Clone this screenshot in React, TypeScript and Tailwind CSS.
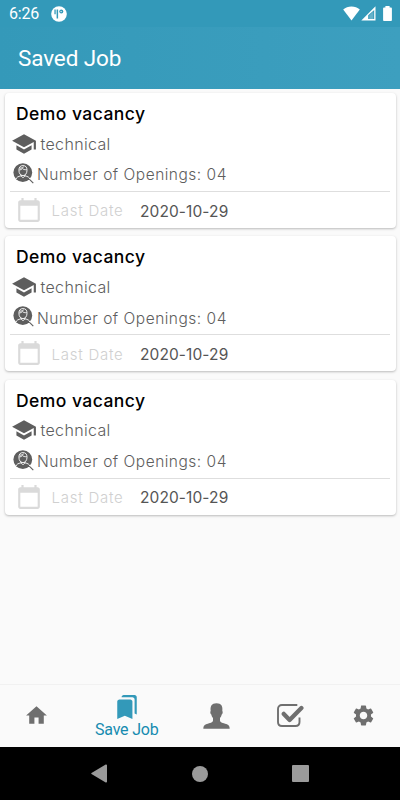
import { MdBookmarks, MdHome, MdSchool, MdSettings } from 'react-icons/md'

const jobs = [
  { id: 1, title: 'Demo vacancy', category: 'technical', openings: '04', lastDate: '2020-10-29' },
  { id: 2, title: 'Demo vacancy', category: 'technical', openings: '04', lastDate: '2020-10-29' },
  { id: 3, title: 'Demo vacancy', category: 'technical', openings: '04', lastDate: '2020-10-29' },
]

type Job = (typeof jobs)[number]

function StatusBar() {
  return (
    <div className="h-[27px] bg-[#3399b9] flex items-center justify-between pl-[9px] pr-2 text-white">
      <div className="flex items-center gap-[12px] pt-px">
        <span className="text-[16px] leading-none w-[30px] whitespace-nowrap tracking-[-0.2px]">6:26</span>
        <svg className="w-4 h-4" viewBox="0 0 16 16">
          <circle cx="8" cy="8" r="7.8" fill="white" />
          <path d="M3.4 3.6h1.3v4.600h-1.300zM5.600 3.400h1.500v9.200H5.600z" fill="#3399b9" />
          <circle cx="10.300" cy="5.600" r="2" fill="#3399b9" />
          <circle cx="10.100" cy="5.600" r=".7" fill="white" />
        </svg>
      </div>
      <div className="flex items-center">
        <svg className="w-[17px] h-[15px]" viewBox="0 0 17 15">
          <path d="M.2 3.6C2.5 1.6 5.2.5 8.5.5s6 1.1 8.3 3.1L8.5 14.4z" fill="white" />
        </svg>
        <svg className="w-[15px] h-[15px] ml-px" viewBox="0 0 15 15">
          <path fillRule="evenodd" d="M14.5.3v14.1H.3zM13.2 3.900 7.2 9.2v3.9h6z" fill="white" />
          <path d="M8.3 9.2 12.3 5.5v7.600H8.3z" fill="white" fillOpacity=".25" />
        </svg>
        <svg className="w-[9px] h-[15px] ml-[7px]" viewBox="0 0 9 15">
          <path d="M2.4 0h4.2v1.5h1.2c.6 0 1.1.5 1.1 1.1v11.3c0 .6-.5 1-1.1 1H1.2c-.6 0-1.1-.4-1.1-1V2.6c0-.6.5-1.1 1.1-1.1h1.2z" fill="white" />
        </svg>
      </div>
    </div>
  )
}

function CandidateSearchIcon() {
  return (
    <svg className="w-[21px] h-[21px] shrink-0" viewBox="0 0 21 21" fill="none">
      <circle cx="9.8" cy="9.6" r="9.4" fill="#5e5e5e" />
      <path d="m16 15.9 4.3 4.3" stroke="#5e5e5e" strokeWidth="1.1" />
      <g stroke="white" strokeWidth=".9">
        <path d="M5.9 7.3c0-3.3 1.4-4.7 4.1-4.7s4 1.5 4 4.6c0 3.2-1.7 5.4-4 5.4S5.9 10.6 5.9 7.3z" />
        <path d="M6.2 7.1c1.5-.2 2.5-.7 3.1-1.6 1.1 1 2.5 1.3 4.4 1.2M6.7 5.2c2-.1 3.2-.5 4.1-1.4" />
        <path d="M3 16.2c.4-2 2.2-2.7 5-3.4l2 2 2-2c2.7.7 4.5 1.4 4.8 3.3M8.3 11.8v1.3M11.7 11.8v1.3" />
      </g>
    </svg>
  )
}

function CalendarIcon() {
  return (
    <svg className="w-[26px] h-[26px] shrink-0" viewBox="0 0 24 24" fill="#dadada">
      <path d="M20 3h-1V1h-2v2H7V1H5v2H4c-1.1 0-2 .9-2 2v16c0 1.1.9 2 2 2h16c1.1 0 2-.9 2-2V5c0-1.1-.9-2-2-2zm0 18H4V8h16v13z" />
    </svg>
  )
}

function JobCard({ job }: { job: Job }) {
  return (
    <article className="h-[135px] bg-white rounded-[4px] shadow-[0_1px_2.5px_rgba(0,0,0,0.26)] px-[5.5px] font-[Inter,sans-serif]">
      <h2 className="h-[38px] pt-[10px] pl-[6px] text-[17.5px] leading-[21px] font-medium tracking-[0.45px] text-black whitespace-nowrap">
        {job.title}
      </h2>
      <div className="h-[25px] flex items-center pl-[0.5px] text-[#5e5e5e]">
        <MdSchool className="w-[26px] h-[26px] shrink-0" />
        <span className="ml-[4px] text-[16px] font-light tracking-[0.35px]">{job.category}</span>
      </div>
      <div className="h-[35px] flex items-center pl-[2.5px] text-[#5e5e5e]">
        <CandidateSearchIcon />
        <span className="ml-[3.5px] pt-[3px] text-[15.5px] font-light tracking-[0.5px] whitespace-nowrap">
          Number of Openings: {job.openings}
        </span>
      </div>
      <div className="h-[36px] border-t border-[#dedede] flex items-center pl-[5.5px] pt-px">
        <CalendarIcon />
        <span className="ml-[10px] pt-[3px] w-[88.5px] text-[15px] font-light tracking-[0.75px] text-[#d0d0d0]">Last Date</span>
        <span className="pt-[3px] text-[15.5px] tracking-[0.1px] text-[#555555]">{job.lastDate}</span>
      </div>
    </article>
  )
}

function BottomNav() {
  return (
    <nav className="h-[63px] shrink-0 bg-[#fafafa] border-t border-[#f1f1f1] flex text-[#6f6f6f]">
      <button className="flex-1 flex items-center justify-center pb-[2px]">
        <MdHome className="w-[25px] h-[25px]" />
      </button>
      <button className="w-[107px] flex flex-col items-center pt-[9px] text-[#3399b9]">
        <MdBookmarks className="w-[26px] h-[26px]" />
        <span className="text-[16px] leading-[20px] tracking-[-0.2px] text-[#168bb0]">Save Job</span>
      </button>
      <button className="flex-1 flex items-center justify-center pb-px">
        <svg className="w-[27px] h-[26px]" viewBox="0 0 27 26" fill="currentColor">
          <path d="M.3 25.7c.1-2.300.8-3.800 3.400-4.700 3.200-1.100 6.200-1.600 6.300-3.600v-2.500c-.9-.8-1.400-2-1.700-3.500-.8-.3-1.200-1.700-.9-2.800l.3-.5C7.100 3.300 8.600.3 13.500.3s6.400 3 5.800 7.800l.3.5c.3 1.100-.1 2.500-.9 2.800-.3 1.500-.8 2.700-1.700 3.500v2.500c.1 2 3.100 2.500 6.300 3.600 2.600.9 3.300 2.400 3.400 4.700z" />
        </svg>
      </button>
      <button className="flex-1 flex items-center justify-center pb-px">
        <svg className="w-[27px] h-[23px]" viewBox="0 0 27 23" fill="none" stroke="currentColor" strokeLinejoin="round">
          <path d="M20.3 1H5C2.5 1 1 2.5 1 5v13c0 2.5 1.5 4 4 4h13.5c2.500 0 4-1.500 4-4v-4.500" strokeWidth="1.9" />
          <path d="m6.8 9.9 5.8 6L24.4 4" strokeWidth="4.3" strokeLinecap="round" />
        </svg>
      </button>
      <button className="flex-1 flex items-center justify-center pb-[2px]">
        <MdSettings className="w-[25px] h-[25px]" />
      </button>
    </nav>
  )
}

function SystemNav() {
  return (
    <div className="h-[53px] shrink-0 bg-black flex items-center justify-between px-[91px]">
      <svg className="w-4 h-[19px]" viewBox="0 0 16 19" fill="#9b9b9b">
        <path d="M14.7.6c.6-.3 1.3 0 1.3.7v16.4c0 .7-.7 1-1.3.7L.5 10c-.4-.3-.4-.8 0-1z" />
      </svg>
      <div className="w-4 h-4 rounded-full bg-[#9b9b9b]" />
      <div className="w-[17px] h-[17px] rounded-[1px] bg-[#9b9b9b]" />
    </div>
  )
}

export default function App() {
  return (
    <div className="w-[400px] h-[800px] flex flex-col overflow-hidden bg-[#fafafa] font-[Roboto,sans-serif]">
      <StatusBar />
      <header className="h-[62px] shrink-0 flex items-center pl-[18px] pt-[2px] bg-gradient-to-r from-[#3499b9] to-[#3d9fbf]">
        <h1 className="text-[22.5px] tracking-[-0.12px] text-white whitespace-nowrap">Saved Job</h1>
      </header>
      <main className="flex-1 px-[4.5px] pt-[4px] flex flex-col gap-[8.3px]">
        {jobs.map((job) => (
          <JobCard key={job.id} job={job} />
        ))}
      </main>
      <BottomNav />
      <SystemNav />
    </div>
  )
}
